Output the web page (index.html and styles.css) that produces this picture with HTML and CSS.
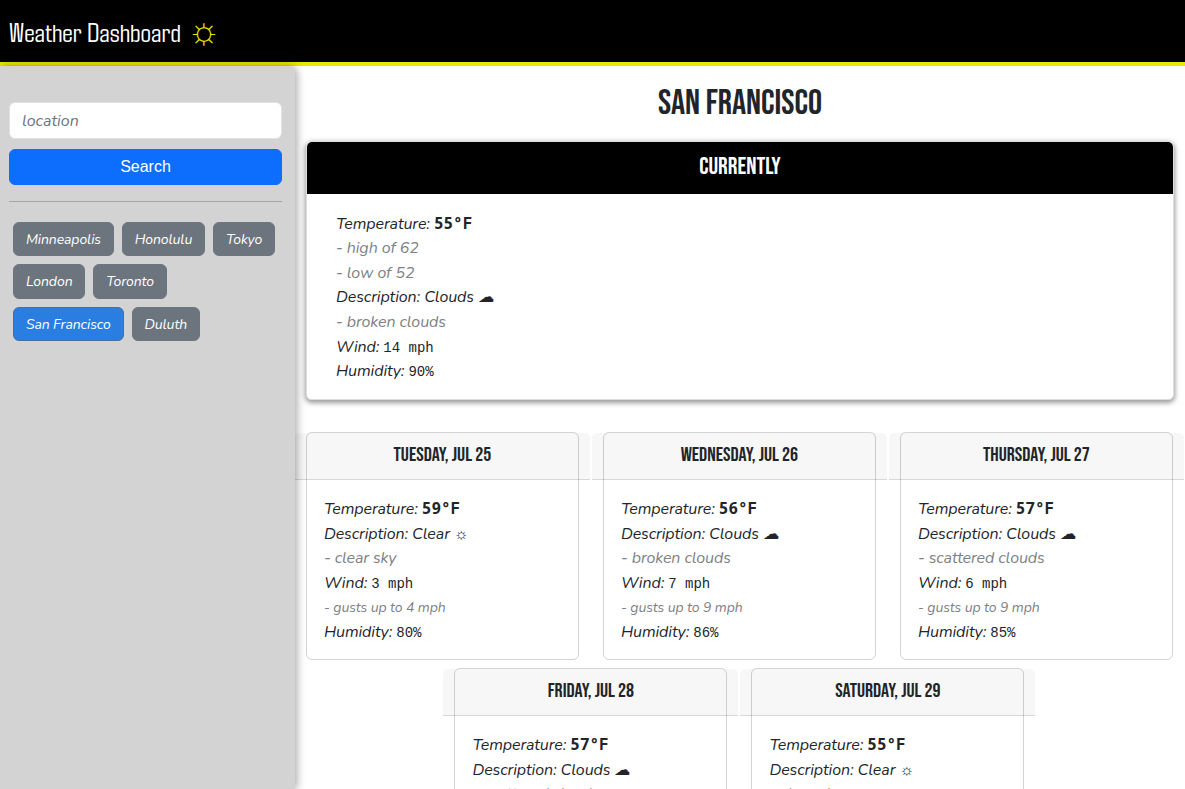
FILE: index.html
```html
<!DOCTYPE html>
<html lang="en">
<head>
<meta charset="utf-8">
<title>Weather Dashboard</title>
<link rel="stylesheet" href="styles.css">
</head>
<body>
<header class="topbar">
  <h1 class="brand">Weather Dashboard</h1>
  <span class="sun">☼</span>
</header>
<div class="layout">
  <aside class="sidebar">
    <input class="location" type="text" placeholder="location">
    <button class="search">Search</button>
    <hr class="rule">
    <div class="cities">
      <button class="city">Minneapolis</button>
      <button class="city">Honolulu</button>
      <button class="city">Tokyo</button>
      <button class="city">London</button>
      <button class="city">Toronto</button>
      <button class="city active">San Francisco</button>
      <button class="city">Duluth</button>
    </div>
  </aside>
  <main class="main">
    <h2 class="place">San Francisco</h2>
    <section class="current">
      <h3 class="current-head">Currently</h3>
      <div class="current-body">
        <p class="line">Temperature: <b>55°F</b></p>
        <p class="line muted">- high of 62</p>
        <p class="line muted">- low of 52</p>
        <p class="line">Description: Clouds ☁</p>
        <p class="line muted">- broken clouds</p>
        <p class="line">Wind: <code>14 mph</code></p>
        <p class="line">Humidity: <code>90%</code></p>
      </div>
    </section>
    <section class="forecast">
      <article class="day">
        <h4 class="day-head">Tuesday, Jul 25</h4>
        <div class="day-body">
          <p class="line">Temperature: <b>59°F</b></p>
          <p class="line">Description: Clear ☼</p>
          <p class="line muted">- clear sky</p>
          <p class="line">Wind: <code>3 mph</code></p>
          <p class="line muted small">- gusts up to 4 mph</p>
          <p class="line">Humidity: <code>80%</code></p>
        </div>
      </article>
      <article class="day">
        <h4 class="day-head">Wednesday, Jul 26</h4>
        <div class="day-body">
          <p class="line">Temperature: <b>56°F</b></p>
          <p class="line">Description: Clouds ☁</p>
          <p class="line muted">- broken clouds</p>
          <p class="line">Wind: <code>7 mph</code></p>
          <p class="line muted small">- gusts up to 9 mph</p>
          <p class="line">Humidity: <code>86%</code></p>
        </div>
      </article>
      <article class="day">
        <h4 class="day-head">Thursday, Jul 27</h4>
        <div class="day-body">
          <p class="line">Temperature: <b>57°F</b></p>
          <p class="line">Description: Clouds ☁</p>
          <p class="line muted">- scattered clouds</p>
          <p class="line">Wind: <code>6 mph</code></p>
          <p class="line muted small">- gusts up to 9 mph</p>
          <p class="line">Humidity: <code>85%</code></p>
        </div>
      </article>
      <article class="day">
        <h4 class="day-head">Friday, Jul 28</h4>
        <div class="day-body">
          <p class="line">Temperature: <b>57°F</b></p>
          <p class="line">Description: Clouds ☁</p>
          <p class="line muted">- scattered clouds</p>
        </div>
      </article>
      <article class="day">
        <h4 class="day-head">Saturday, Jul 29</h4>
        <div class="day-body">
          <p class="line">Temperature: <b>55°F</b></p>
          <p class="line">Description: Clear ☼</p>
          <p class="line muted">- clear sky</p>
        </div>
      </article>
    </section>
  </main>
</div>
</body>
</html>
```
FILE: styles.css
```css
* { box-sizing: border-box; }
html, body { margin: 0; height: 789px; overflow: hidden; }
body { font-family: Nunito, sans-serif; font-size: 16px; color: #212529; background: #fff; }
.topbar { height: 66px; background: #000; border-bottom: 4px solid #e8e800; display: flex; align-items: center; padding: 2px 9px 0; gap: 6px; }
.brand { margin: -2px 0 0; font-family: Agdasima, "Smooch Sans", sans-serif; font-weight: 400; font-size: 27.7px; color: #fff; }
.sun { font-size: 37px; line-height: 1; color: #e6e600; margin-top: -2px; }
.layout { display: flex; height: 723px; }
.sidebar { width: 295px; flex: none; background: #d3d3d3; border-radius: 0 8px 0 0; box-shadow: 2px 0 8px rgba(0,0,0,.35); padding: 36px 13px 0 9px; }
.location { display: block; width: 273px; height: 37px; margin-bottom: 10px; border: 1px solid #dee2e6; border-radius: 6px; padding: 0 12px; font: italic 16px Nunito, sans-serif; background: #fff; }
.location::placeholder { color: #6c757d; opacity: 1; }
.search { display: block; width: 273px; height: 36px; border: 1px solid #0d6efd; border-radius: 6px; background: #0d6efd; color: #fff; font: 16px "Liberation Sans", sans-serif; }
.rule { margin: 16px 0 20px; border: 0; border-top: 1px solid #a6a6a6; }
.cities { display: flex; flex-wrap: wrap; gap: 8px; padding-left: 4px; }
.city { height: 34.45px; padding: 0 11.88px; border: 1px solid #6c757d; border-radius: 6px; background: #6c757d; color: #fff; font: italic 14px Nunito, sans-serif; letter-spacing: -.09px; }
.city.active { background: #2a7de1; border-color: #4a6f9c; }
.main { flex: 1; padding: 0 11px; min-width: 0; overflow: hidden; }
.place { margin: 19px 0 18px; height: 38px; line-height: 38px; text-align: center; font-family: "Bebas Neue", sans-serif; font-weight: 400; font-size: 35.2px; text-transform: uppercase; }
.current { height: 259px; border-radius: 6px; border: 1px solid #ddd; box-shadow: 0 2px 5px 1px rgba(0,0,0,.4); overflow: hidden; }
.current-head { margin: 0; height: 52px; line-height: 50px; background: #000; color: #fff; text-align: center; font-family: "Bebas Neue", sans-serif; font-weight: 400; font-size: 24px; text-transform: uppercase; }
.current-body { padding: 17.6px 29px; }
.line { margin: 0; height: 24.6px; line-height: 24.6px; font-style: italic; letter-spacing: -.09px; }
.line b { font-family: "Noto Sans Mono", monospace; font-style: normal; font-weight: 700; letter-spacing: 0; line-height: 1; }
.muted { color: #7d8185; }
.small { font-size: 14px; line-height: 26px; }
code { font-family: "Liberation Mono", monospace; font-size: 14px; font-style: normal; letter-spacing: 0; }
.forecast { display: flex; flex-wrap: wrap; justify-content: center; gap: 8px 24px; margin: 32px 0 0 -1.2px; }
.day { width: 273px; height: 228px; border: 1px solid #d2d4d6; border-radius: 6px; }
.day-head { margin: 0 -12px; height: 47px; line-height: 44px; background: rgba(0,0,0,.03); border-bottom: 1px solid rgba(0,0,0,.13); border-radius: 5px 5px 0 0; text-align: center; font-family: "Bebas Neue", sans-serif; font-weight: 400; font-size: 20px; text-transform: uppercase; }
.day-body { padding: 17px 17px; }
```
